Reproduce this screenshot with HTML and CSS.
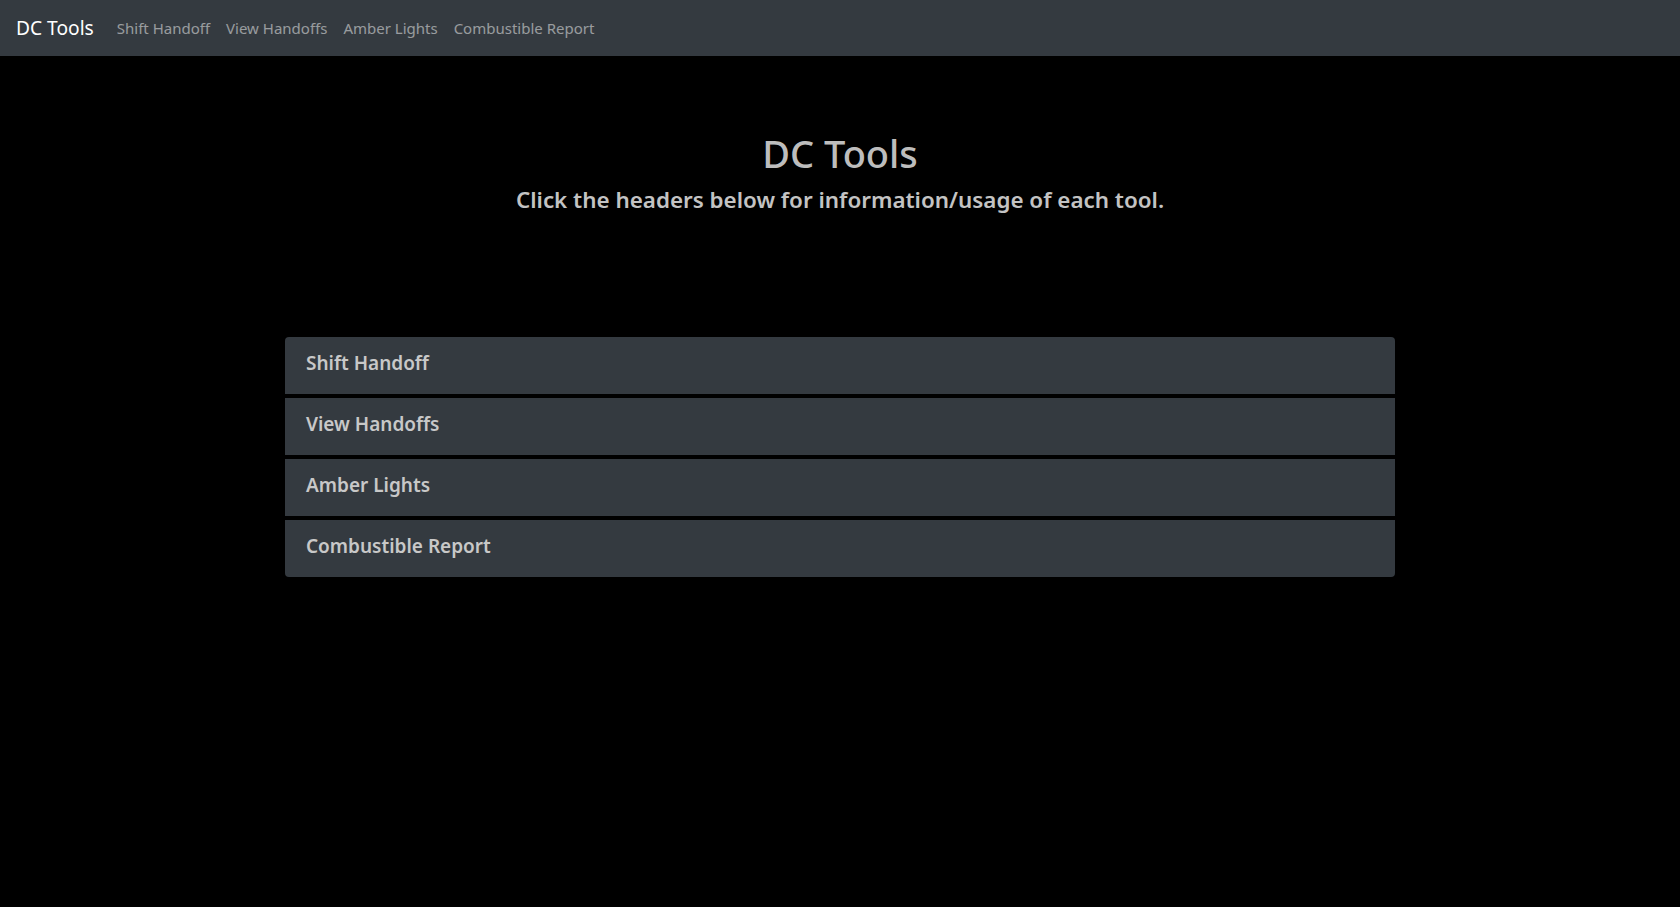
FILE: index.html
```html
<!DOCTYPE html>
<html lang="en">
<head>
<meta charset="utf-8">
<title>DC Tools</title>
<link rel="stylesheet" href="styles.css">
</head>
<body>
<nav class="navbar">
  <a class="brand" href="#">DC Tools</a>
  <ul class="nav-links">
    <li><a href="#">Shift Handoff</a></li>
    <li><a href="#">View Handoffs</a></li>
    <li><a href="#">Amber Lights</a></li>
    <li><a href="#">Combustible Report</a></li>
  </ul>
</nav>
<main class="container">
  <header class="intro">
    <h1 class="title">DC Tools</h1>
    <h2 class="subtitle">Click the headers below for information/usage of each tool.</h2>
  </header>
  <section class="accordion">
    <div class="card"><h5 class="card-title">Shift Handoff</h5></div>
    <div class="card"><h5 class="card-title">View Handoffs</h5></div>
    <div class="card"><h5 class="card-title">Amber Lights</h5></div>
    <div class="card"><h5 class="card-title">Combustible Report</h5></div>
  </section>
</main>
</body>
</html>
```
FILE: styles.css
```css
* { box-sizing: border-box; }
html, body { margin: 0; padding: 0; }
body {
  background: #000;
  color: #c3c3c3;
  font-family: "Noto Sans", "Open Sans", sans-serif;
  font-size: 16px;
  line-height: 1.5;
  min-height: 907px;
}
a { text-decoration: none; }
.navbar {
  height: 56px;
  background: #343a40;
  display: flex;
  align-items: center;
  padding: 8px 16px;
}
.brand {
  color: #fff;
  font-size: 19.2px;
  margin-right: 15px;
  line-height: 1.5;
}
.nav-links {
  list-style: none;
  margin: 0;
  padding: 0;
  display: flex;
}
.nav-links a {
  display: block;
  color: rgba(255,255,255,0.5);
  padding: 8px 8px;
  font-size: 15px;
}
.container {
  max-width: 1140px;
  margin: 0 auto;
  padding: 0 15px;
}
.intro {
  text-align: center;
  padding-top: 73px;
  margin-bottom: 123px;
}
.title {
  margin: 0 0 8px;
  font-size: 38px;
  font-weight: 500;
  line-height: 48px;
  color: #bdbdbd;
}
.subtitle {
  margin: 0 0 8px;
  font-size: 22.4px;
  font-weight: 600;
  line-height: 29px;
  color: #c3c3c3;
}
.accordion {
  display: flex;
  flex-direction: column;
  gap: 4px;
}
.card {
  background: #343a40;
  padding: 14px 20px 11px 21px;
}
.card:first-child { border-radius: 4px 4px 0 0; }
.card:last-child { border-radius: 0 0 4px 4px; }
.card-title {
  margin: 0 0 8px;
  font-size: 19px;
  font-weight: 600;
  line-height: 24px;
  color: #c8c8c8;
}
```
